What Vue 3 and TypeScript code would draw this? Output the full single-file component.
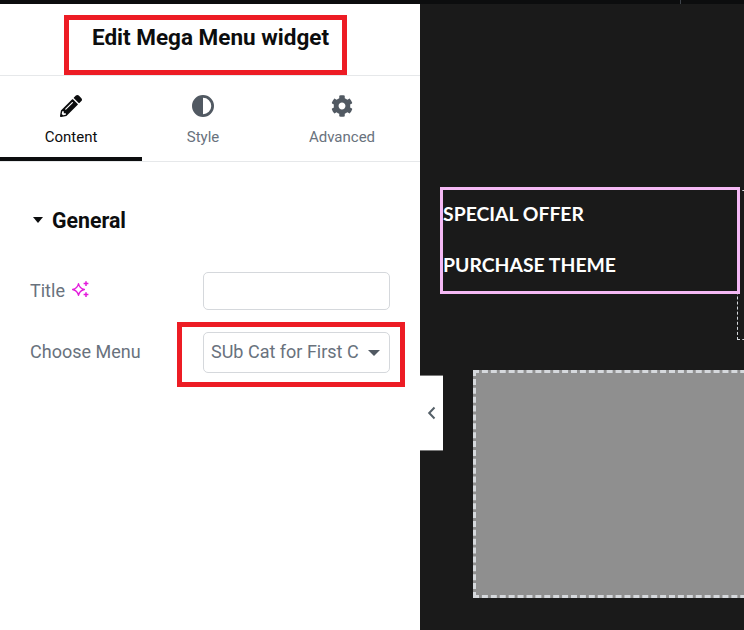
<script setup lang="ts">
interface Tab { label: string; active: boolean; icon: string }
const tabs: Tab[] = [
  { label: 'Content', active: true, icon: 'pencil' },
  { label: 'Style', active: false, icon: 'contrast' },
  { label: 'Advanced', active: false, icon: 'gear' },
]
</script>

<template>
  <div class="page">
    <div class="topbar"><span class="tick"></span></div>
    <div class="main">
      <aside class="panel">
        <header class="head">
          <h1 class="head-title">Edit Mega Menu widget</h1>
          <div class="mark mark-head"></div>
        </header>
        <nav class="tabs">
          <div v-for="t in tabs" :key="t.label" class="tab" :class="{ active: t.active }">
            <svg v-if="t.icon === 'pencil'" class="tab-icon" viewBox="0 0 512 512" fill="currentColor">
              <path d="M497.9 142.1l-46.1 46.1c-4.7 4.7-12.3 4.7-17 0l-111-111c-4.7-4.7-4.7-12.3 0-17l46.1-46.1c18.7-18.7 49.1-18.7 67.9 0l60.1 60.1c18.8 18.7 18.8 49.1 0 67.9zM284.2 99.8L21.6 362.4.4 483.9c-2.9 16.4 11.4 30.6 27.8 27.8l121.5-21.3 262.6-262.6c4.7-4.7 4.7-12.3 0-17l-111-111c-4.8-4.7-12.4-4.7-17.1 0zM124.1 339.9c-5.5-5.5-5.5-14.3 0-19.8l154-154c5.5-5.5 14.3-5.5 19.8 0s5.5 14.3 0 19.8l-154 154c-5.5 5.5-14.3 5.5-19.8 0zM88 424h48v36.3l-64.5 11.3-31.1-31.1L51.7 376H88v48z" />
            </svg>
            <svg v-else-if="t.icon === 'contrast'" class="tab-icon" viewBox="0 0 24 24" fill="currentColor">
              <path d="M12 0a12 12 0 1 0 0 24a12 12 0 0 0 0-24zm0 3a9 9 0 0 1 0 18z" />
            </svg>
            <svg v-else class="tab-icon" viewBox="0 0 512 512" fill="currentColor">
              <path d="M487.4 315.7l-42.6-24.6c4.3-23.2 4.3-47 0-70.2l42.6-24.6c4.9-2.8 7.1-8.6 5.5-14-11.1-35.6-30-67.8-54.7-94.6-3.8-4.1-10-5.1-14.8-2.3L380.8 110c-17.9-15.4-38.5-27.3-60.8-35.1V25.8c0-5.6-3.9-10.5-9.4-11.7-36.7-8.2-74.3-7.8-109.2 0-5.5 1.2-9.4 6.1-9.4 11.7V75c-22.2 7.9-42.8 19.8-60.8 35.1L88.7 85.5c-4.9-2.8-11-1.9-14.8 2.3-24.7 26.7-43.6 58.9-54.7 94.6-1.7 5.4.6 11.2 5.5 14L67.3 221c-4.3 23.2-4.3 47 0 70.2l-42.6 24.6c-4.9 2.8-7.1 8.6-5.5 14 11.1 35.6 30 67.8 54.7 94.6 3.8 4.1 10 5.1 14.8 2.3l42.6-24.6c17.9 15.4 38.5 27.3 60.8 35.1v49.2c0 5.6 3.9 10.5 9.4 11.7 36.7 8.2 74.3 7.8 109.2 0 5.5-1.2 9.4-6.1 9.4-11.7v-49.2c22.2-7.9 42.8-19.8 60.8-35.1l42.6 24.6c4.9 2.8 11 1.9 14.8-2.3 24.7-26.7 43.6-58.9 54.7-94.6 1.5-5.5-.7-11.3-5.6-14.1zM256 336c-44.1 0-80-35.9-80-80s35.9-80 80-80 80 35.9 80 80-35.9 80-80 80z" />
            </svg>
            <span class="tab-label">{{ t.label }}</span>
          </div>
        </nav>
        <section class="form">
          <div class="section-title">
            <span class="caret-dark"></span>
            <span>General</span>
          </div>
          <div class="row row-title">
            <label class="label">
              Title
              <svg class="spark" viewBox="0 0 18 18" fill="none" stroke="#e31cdc">
                <path d="M6.5 2.6C7.2 6 8.8 7.7 12.4 8.5C8.8 9.3 7.2 11 6.5 14.4C5.8 11 4.2 9.3 .6 8.5C4.2 7.7 5.8 6 6.5 2.6Z" stroke-width="1.3" stroke-linejoin="round" />
                <path d="M14 .2V5M11.6 2.6H16.4M14 11.2V16M11.6 13.6H16.4" stroke-width="1.5" />
              </svg>
            </label>
            <div class="input"></div>
          </div>
          <div class="row row-menu">
            <label class="label">Choose Menu</label>
            <div class="select">
              <span class="select-text">SUb Cat for First C</span>
              <span class="caret-grey"></span>
              <div class="mark mark-select"></div>
            </div>
          </div>
        </section>
      </aside>
      <main class="preview">
        <div class="collapse">
          <svg viewBox="0 0 10 14" width="10" height="14" fill="none" stroke="#556068" stroke-width="2">
            <path d="M7.5 1.5L2.2 7L7.5 12.5" />
          </svg>
        </div>
        <div class="frame"></div>
        <div class="menu-box">
          <div class="menu-item">SPECIAL OFFER</div>
          <div class="menu-item">PURCHASE THEME</div>
        </div>
        <div class="placeholder"></div>
      </main>
    </div>
  </div>
</template>

<style scoped>
.page {
  width: 744px;
  height: 630px;
  overflow: hidden;
  display: flex;
  flex-direction: column;
  font-family: Roboto, "Liberation Sans", sans-serif;
}
.topbar {
  height: 4px;
  flex: none;
  background: #0c0d0e;
  position: relative;
}
.tick {
  position: absolute;
  left: 680px;
  top: 0;
  width: 1px;
  height: 4px;
  background: #3f444b;
}
.main {
  flex: 1;
  display: flex;
  min-height: 0;
}
.panel {
  width: 420px;
  flex: none;
  background: #fff;
  display: flex;
  flex-direction: column;
}
.head {
  height: 72px;
  flex: none;
  box-sizing: border-box;
  border-bottom: 1px solid #e6e8ea;
  position: relative;
  padding-left: 92px;
  padding-top: 19px;
}
.head-title {
  margin: 0;
  font-size: 22.5px;
  line-height: 28px;
  font-weight: 700;
  color: #0c0d0e;
}
.mark {
  position: absolute;
  box-sizing: border-box;
  border: 5px solid #ed1c24;
}
.mark-head {
  left: 64px;
  top: 11px;
  width: 283px;
  height: 60px;
}
.tabs {
  height: 86px;
  flex: none;
  box-sizing: border-box;
  display: grid;
  grid-template-columns: 142px 122px 156px;
  border-bottom: 1px solid #e6e8ea;
}
.tab {
  display: flex;
  flex-direction: column;
  align-items: center;
  padding-top: 19px;
  color: #515962;
  box-sizing: border-box;
  height: 85px;
}
.tab.active {
  color: #0c0d0e;
  border-bottom: 4px solid #0c0d0e;
}
.tab-icon {
  width: 22px;
  height: 22px;
  flex: none;
}
.tab-label {
  margin-top: 11px;
  font-size: 15px;
  line-height: 18px;
  color: #69727d;
}
.tab.active .tab-label {
  color: #0c0d0e;
}
.form {
  padding: 46px 30px 0;
}
.section-title {
  display: flex;
  align-items: center;
  gap: 9.5px;
  height: 24px;
  font-size: 21.3px;
  font-weight: 700;
  color: #0c0d0e;
}
.caret-dark {
  width: 0;
  height: 0;
  margin-left: 2.5px;
  border-left: 5.5px solid transparent;
  border-right: 5.5px solid transparent;
  border-top: 6px solid #0c0d0e;
}
.row {
  display: flex;
  align-items: center;
  justify-content: space-between;
}
.row-title {
  margin-top: 40px;
}
.row-menu {
  margin-top: 22px;
}
.label {
  display: flex;
  align-items: center;
  gap: 7px;
  font-size: 18px;
  color: #69727d;
  padding-bottom: 2px;
}
.spark {
  width: 18px;
  height: 18px;
}
.input,
.select {
  width: 187px;
  box-sizing: border-box;
  border: 1px solid #d5d8dc;
  border-radius: 5px;
  background: #fff;
}
.input {
  height: 38px;
}
.select {
  height: 41px;
  position: relative;
  display: flex;
  align-items: center;
  padding-left: 7px;
}
.select-text {
  font-size: 18px;
  color: #69727d;
  white-space: nowrap;
  padding-bottom: 2px;
  width: 148px;
}
.caret-grey {
  margin-left: 9px;
  width: 0;
  height: 0;
  border-left: 6px solid transparent;
  border-right: 6px solid transparent;
  border-top: 6px solid #515962;
}
.mark-select {
  left: -27px;
  top: -11px;
  width: 228px;
  height: 65px;
}
.preview {
  flex: 1;
  min-width: 0;
  position: relative;
  overflow: hidden;
  background: #1a1a1a;
  padding: 183px 0 0 20px;
}
.collapse {
  position: absolute;
  left: 0;
  top: 371px;
  width: 23px;
  height: 76px;
  box-sizing: border-box;
  background: #fff;
  border-top: 1px solid #7a7a7a;
  border-bottom: 1px solid #7a7a7a;
  display: flex;
  align-items: center;
  justify-content: center;
}
.frame {
  position: absolute;
  left: 317px;
  top: 186px;
  width: 40px;
  height: 150px;
  box-sizing: border-box;
  border: 1px dashed #d5d8dc;
}
.menu-box {
  position: relative;
  width: 300px;
  height: 107px;
  box-sizing: border-box;
  border: 3px solid #f5b9f5;
  background: #1a1a1a;
  display: flex;
  flex-direction: column;
  gap: 21px;
  padding-top: 9px;
}
.menu-item {
  font-family: Lato, sans-serif;
  font-weight: 700;
  font-size: 19.4px;
  line-height: 30px;
  color: #fff;
  white-space: nowrap;
}
.placeholder {
  margin: 76px 0 0 33px;
  width: 300px;
  height: 228px;
  box-sizing: border-box;
  background: #8f8f8f;
  border: 3px dashed #d5d8dc;
}
</style>

<style>
html, body { margin: 0; background: #1a1a1a; }
</style>
